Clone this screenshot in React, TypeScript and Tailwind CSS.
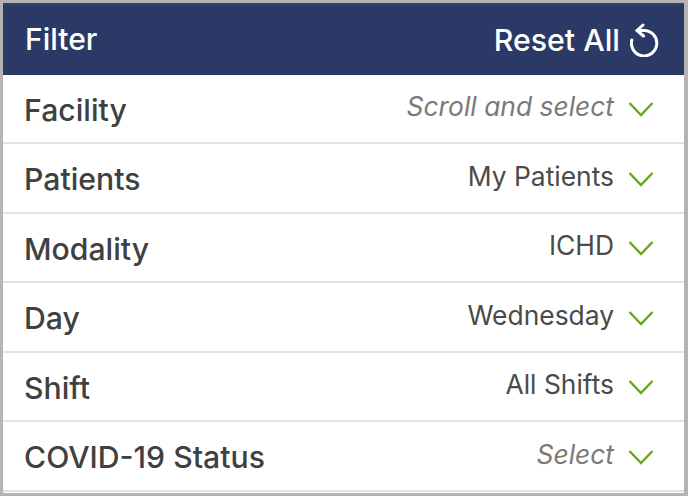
const rows = [
  { label: "Facility", value: "Scroll and select", placeholder: true },
  { label: "Patients", value: "My Patients", placeholder: false },
  { label: "Modality", value: "ICHD", placeholder: false },
  { label: "Day", value: "Wednesday", placeholder: false },
  { label: "Shift", value: "All Shifts", placeholder: false },
  { label: "COVID-19 Status", value: "Select", placeholder: true },
];

export default function App() {
  return (
    <div className="w-[688px] h-[496px] overflow-hidden bg-[#b4b4b4] pt-[3px] pl-[3px] pr-[4px] pb-[3px] font-['Inter',sans-serif]">
      <div className="flex flex-col h-full bg-white">
        <div className="flex items-center justify-between h-[71.5px] bg-[#2a3966] border-t-2 border-[#33436f] pl-[22px] pr-[24px] pb-[2px] text-white shrink-0">
          <span className="text-[30px] font-[550] leading-none">Filter</span>
          <div className="flex items-center gap-[10px]">
            <span className="text-[30.3px] font-medium leading-none pt-[2px]">Reset All</span>
            <svg width="30" height="34" viewBox="0 0 30 34" fill="none" stroke="white" strokeWidth="3" strokeLinecap="round" strokeLinejoin="round" className="translate-y-[1px]">
              <path d="M13 2 L7 7.5 L13.5 13" />
              <path d="M7 7.5 H14 A12.7 12.7 0 1 1 1.8 17" />
            </svg>
          </div>
        </div>
        {rows.map((r) => (
          <div key={r.label} className="flex items-center justify-between h-[69.5px] shrink-0 border-b-2 border-[#e2e2e2] pl-[21px] pr-[30px]">
            <span className="text-[30.2px] font-[550] leading-none text-[#404040] pt-[3px]">{r.label}</span>
            <div className="flex items-center gap-[14px]">
              <span className={r.placeholder ? "text-[26.4px] italic leading-none text-[#7a7a7a] -translate-y-[2px]" : "text-[26.4px] leading-none text-[#4a4a4a] -translate-y-[2px]"}>{r.value}</span>
              <svg width="26" height="16" viewBox="0 0 26 16" fill="none" stroke="#6aa51f" strokeWidth="2.4" className="translate-y-[1px]">
                <path d="M1.5 2 L13 14 L24.5 2" />
              </svg>
            </div>
          </div>
        ))}
      </div>
    </div>
  );
}
